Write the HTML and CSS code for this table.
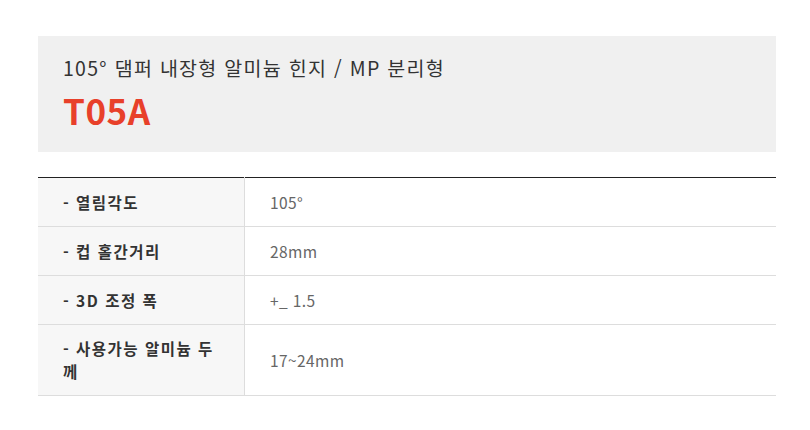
FILE: index.html
```html
<!DOCTYPE html>
<html lang="ko">
<head>
<meta charset="utf-8">
<link rel="stylesheet" href="styles.css">
</head>
<body>
<div class="page">
  <div class="head">
    <p class="sub">105° 댐퍼 내장형 알미늄 힌지 / MP 분리형</p>
    <h1 class="model">T05A</h1>
  </div>
  <table class="spec">
    <tr><th>- 열림각도</th><td>105°</td></tr>
    <tr><th>- 컵 홀간거리</th><td>28mm</td></tr>
    <tr><th>- 3D 조정 폭</th><td>+_ 1.5</td></tr>
    <tr class="tall"><th>- 사용가능 알미늄 두께</th><td>17~24mm</td></tr>
  </table>
</div>
</body>
</html>
```
FILE: styles.css
```css
html, body { margin: 0; padding: 0; background: #fff; }
body { font-family: "Noto Sans CJK KR", "Noto Sans", sans-serif; }
.page { padding: 36px 34px 0 38px; }
.head {
  background: #f0f0f0;
  height: 116px;
  box-sizing: border-box;
  padding: 14px 25px 0;
}
.sub {
  margin: 0;
  font-size: 19.5px;
  line-height: 36px;
  color: #333;
  letter-spacing: 1.3px;
}
.model {
  margin: 0;
  font-size: 35px;
  line-height: 48px;
  font-weight: 700;
  color: #e8402a;
  letter-spacing: 0.5px;
}
.spec {
  margin-top: 25px;
  width: 100%;
  border-collapse: collapse;
  border-top: 1px solid #222;
}
.spec th, .spec td {
  border-bottom: 1px solid #ddd;
  font-size: 15px;
  text-align: left;
  height: 48px;
  padding: 0;
}
.spec th {
  width: 156px;
  padding: 0 25px 0 25px;
  background: #f7f7f7;
  border-right: 1px solid #ddd;
  color: #333;
  font-weight: 700;
  font-size: 15.5px;
  line-height: 23px;
  letter-spacing: 1.5px;
}
.spec td {
  padding-left: 25px;
  color: #666;
  font-size: 15.5px;
  letter-spacing: 0.4px;
}
.spec .tall th, .spec .tall td { height: 70px; }
```
